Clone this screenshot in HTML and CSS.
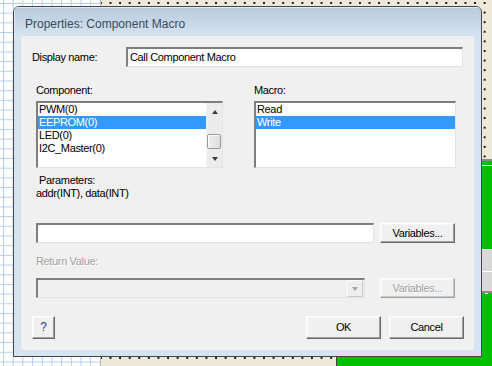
FILE: index.html
```html
<!DOCTYPE html>
<html>
<head>
<meta charset="utf-8">
<link rel="stylesheet" href="styles.css">
</head>
<body>
<div class="desk-grid"></div>
<div class="desk-green">
  <div class="green-line"></div>
</div>
<div class="side-panel"><div class="side-sep"></div></div>

<div class="dialog">
  <div class="titlebar">Properties: Component Macro</div>
  <div class="client">
    <div class="row-name">
      <span class="lbl-name">Display name:</span>
      <div class="text-input name-input">Call Component Macro</div>
    </div>

    <div class="lists">
      <div class="col col-comp">
        <div class="col-lbl">Component:</div>
        <div class="listbox">
          <div class="items">
            <div class="item">PWM(0)</div>
            <div class="item sel">EEPROM(0)</div>
            <div class="item">LED(0)</div>
            <div class="item">I2C_Master(0)</div>
          </div>
          <div class="vscroll">
            <div class="sb-btn"><span class="tri-up"></span></div>
            <div class="sb-track"><div class="sb-thumb"></div></div>
            <div class="sb-btn"><span class="tri-down"></span></div>
          </div>
        </div>
      </div>
      <div class="col col-macro">
        <div class="col-lbl">Macro:</div>
        <div class="listbox">
          <div class="items">
            <div class="item">Read</div>
            <div class="item sel">Write</div>
          </div>
        </div>
      </div>
    </div>

    <div class="lower">
      <div class="params-lbl">Parameters:</div>
      <div class="params-val">addr(INT), data(INT)</div>

      <div class="field-row args-row">
        <div class="text-input args-input"></div>
        <div class="btn btn-vars">Variables...</div>
      </div>

      <div class="rv-lbl disabled">Return Value:</div>

      <div class="field-row rv-row">
        <div class="combo">
          <div class="combo-text"></div>
          <div class="combo-btn"><span class="tri-down dis"></span></div>
        </div>
        <div class="btn btn-vars btn-dis disabled">Variables...</div>
      </div>
    </div>

    <div class="btn-row">
      <div class="btn btn-help">?</div>
      <div class="btn btn-ok">OK</div>
      <div class="btn btn-cancel">Cancel</div>
    </div>
  </div>
</div>
</body>
</html>
```

FILE: styles.css
```css
html, body {
  margin: 0;
  padding: 0;
}
body {
  width: 492px;
  height: 366px;
  overflow: hidden;
  position: relative;
  background-color: #ece9d8;
  background-image: radial-gradient(circle at 1px 1px, #141414 0.9px, transparent 1.1px);
  background-size: 9.6px 9.6px;
  background-position: 4px 2px;
  font-family: "Liberation Sans", Arial, sans-serif;
  font-size: 11px;
  letter-spacing: -0.35px;
  color: #000;
}

/* desktop canvas behind the dialog */
.desk-grid {
  position: absolute;
  left: 0;
  top: 0;
  width: 100px;
  height: 366px;
  border-right: 1px solid #b8b8b8;
  background-color: #fff;
  background-image:
    linear-gradient(to right, #b3cff2 1px, transparent 1px),
    linear-gradient(to bottom, #b3cff2 1px, transparent 1px);
  background-size: 9.7px 9.7px;
  background-position: 3px 3px;
}
.desk-green {
  position: absolute;
  left: 336px;
  top: 159px;
  right: 0;
  bottom: 0;
  background: #00c000;
  border-top: 2px solid #8a8a8a;
  border-left: 1px solid #444;
}
.green-line {
  height: 1px;
  margin-top: 4px;
  background: #fff;
}
.side-panel {
  position: absolute;
  left: 481px;
  top: 249px;
  width: 11px;
  height: 41px;
  background: #d8d8d8;
  border-top: 1px solid #fff;
  border-bottom: 2px solid #8a8a8a;
  box-shadow: 0 5px 0 -4px #fff;
}
.side-sep {
  height: 1px;
  margin-top: 21px;
  background: #fff;
}

/* dialog window */
.dialog {
  position: absolute;
  left: 13px;
  top: 6px;
  width: 469px;
  height: 351px;
  box-sizing: border-box;
  border: 1px solid #474747;
  border-radius: 6px 6px 0 0;
  background: #d6e3f1;
  overflow: hidden;
}
.titlebar {
  height: 29px;
  box-sizing: border-box;
  padding: 10px 0 0 11px;
  font-size: 12px;
  line-height: 15px;
  letter-spacing: 0;
  color: #3b4a5b;
  background: linear-gradient(to bottom, #b9cadb 0%, #c6d6e6 50%, #d6e3f1 100%);
  box-shadow: inset 1px 1px 0 #dfe8f2;
}
.client {
  margin: 0 7px;
  height: 314px;
  box-sizing: border-box;
  background: #f0f0f0;
  padding: 11px 10px 0 11px;
  display: flex;
  flex-direction: column;
}

.row-name {
  display: flex;
  align-items: center;
  height: 20px;
}
.lbl-name {
  width: 94px;
  line-height: 13px;
}

.text-input {
  box-sizing: border-box;
  height: 20px;
  background: #fff;
  border-style: solid;
  border-width: 2px 1px 1px 2px;
  border-color: #7e7e7e #e3e3e3 #e3e3e3 #7e7e7e;
  padding-left: 2px;
  line-height: 16px;
  white-space: nowrap;
}
.name-input {
  width: 337px;
}

.lists {
  display: flex;
  gap: 31px;
  margin-top: 17px;
  padding-left: 4px;
}
.col-comp { width: 187px; }
.col-macro { width: 202px; }
.col-lbl {
  height: 13px;
  line-height: 13px;
  margin-bottom: 4px;
}
.listbox {
  height: 67px;
  box-sizing: border-box;
  background: #fff;
  border-style: solid;
  border-width: 2px 1px 1px 2px;
  border-color: #7e7e7e #e3e3e3 #e3e3e3 #7e7e7e;
  display: flex;
}
.items {
  flex: 1;
}
.item {
  height: 13px;
  line-height: 13px;
  padding-left: 1px;
  white-space: nowrap;
}
.item.sel {
  background: #3399ff;
  color: #fff;
}

.vscroll {
  width: 16px;
  display: flex;
  flex-direction: column;
  background: #ececec;
  border-left: 1px solid #f4f4f4;
  box-sizing: border-box;
}
.sb-btn {
  height: 17px;
  display: flex;
  align-items: center;
  justify-content: center;
}
.sb-track {
  flex: 1;
  padding-top: 14px;
  box-sizing: border-box;
}
.sb-thumb {
  height: 15px;
  margin: 0 1px 0 0;
  box-sizing: border-box;
  border: 1px solid #9a9a9a;
  border-radius: 2px;
  background: linear-gradient(to right, #f0f0f0, #dedede);
  box-shadow: inset 1px 1px 0 #fff;
}
.tri-up {
  width: 0;
  height: 0;
  border-left: 3.5px solid transparent;
  border-right: 3.5px solid transparent;
  border-bottom: 4px solid #3c3c3c;
}
.tri-down {
  width: 0;
  height: 0;
  border-left: 3.5px solid transparent;
  border-right: 3.5px solid transparent;
  border-top: 4px solid #3c3c3c;
}
.tri-down.dis {
  border-top-color: #a8a8a8;
}

.lower {
  display: flex;
  flex-direction: column;
  padding-left: 4px;
  margin-top: 6px;
}
.params-lbl {
  line-height: 13px;
  padding-left: 3px;
}
.params-val {
  line-height: 13px;
}
.field-row {
  display: flex;
  height: 20px;
}
.args-row {
  margin-top: 23px;
  gap: 6px;
}
.args-input {
  width: 338px;
}
.rv-lbl {
  margin-top: 12px;
  line-height: 13px;
}
.disabled {
  color: #a0a0a0;
  text-shadow: 1px 1px 0 #fff;
}
.rv-row {
  margin-top: 10px;
  gap: 15px;
}
.combo {
  width: 329px;
  height: 20px;
  box-sizing: border-box;
  background: #f0f0f0;
  border-style: solid;
  border-width: 2px 1px 1px 2px;
  border-color: #7e7e7e #e3e3e3 #e3e3e3 #7e7e7e;
  display: flex;
  justify-content: flex-end;
  padding-right: 1px;
}
.combo-text { flex: 1; }
.combo-btn {
  width: 16px;
  height: 17px;
  box-sizing: border-box;
  border: 1px solid;
  border-color: #fafafa #c8c8c8 #c8c8c8 #fafafa;
  background: #eeeeee;
  display: flex;
  align-items: center;
  justify-content: center;
}

.btn {
  box-sizing: border-box;
  height: 20px;
  background: #f0f0f0;
  border-style: solid;
  border-width: 1px;
  border-color: #ffffff #696969 #696969 #ffffff;
  box-shadow: inset -1px -1px 0 #a0a0a0, inset 1px 1px 0 #f7f7f7;
  display: flex;
  align-items: center;
  justify-content: center;
  line-height: 13px;
  white-space: nowrap;
}
.btn-vars {
  width: 75px;
}
.btn-dis {
  border-color: #ffffff #a0a0a0 #a0a0a0 #ffffff;
  box-shadow: inset -1px -1px 0 #c8c8c8, inset 1px 1px 0 #f7f7f7;
}

.btn-row {
  display: flex;
  margin-top: 18px;
  height: 23px;
}
.btn-row .btn {
  height: 23px;
}
.btn-help {
  width: 23px;
  color: #23408e;
  font-size: 12px;
}
.btn-ok {
  width: 75px;
  margin-left: auto;
}
.btn-cancel {
  width: 75px;
  margin-left: 8px;
}
```
